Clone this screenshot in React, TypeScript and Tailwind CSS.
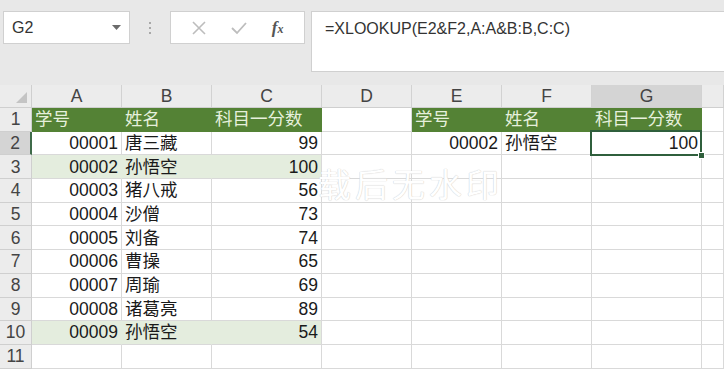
const ids = ["00001", "00002", "00003", "00004", "00005", "00006", "00007", "00008", "00009"];
const names = ["唐三藏", "孙悟空", "猪八戒", "沙僧", "刘备", "曹操", "周瑜", "诸葛亮", "孙悟空"];
const scores = ["99", "100", "56", "73", "74", "65", "69", "89", "54"];

const colWidths = ["w-[90px]", "w-[90px]", "w-[110px]", "w-[90px]", "w-[90px]", "w-[90px]", "w-[110px]", "w-[22px]"];
const letters = ["A", "B", "C", "D", "E", "F", "G", ""];

type Cell = { text?: string; align?: "l" | "r"; kind?: "head" | "hl" | "plain" };

function rowCells(r: number): Cell[] {
  if (r === 1) {
    return [
      { text: "学号", kind: "head" },
      { text: "姓名", kind: "head" },
      { text: "科目一分数", kind: "head" },
      {},
      { text: "学号", kind: "head" },
      { text: "姓名", kind: "head" },
      { text: "科目一分数", kind: "head" },
      {},
    ];
  }
  if (r >= 2 && r <= 10) {
    const i = r - 2;
    const hl = r === 3 || r === 10;
    const k = hl ? "hl" : "plain";
    return [
      { text: ids[i], align: "r", kind: k },
      { text: names[i], kind: k },
      { text: scores[i], align: "r", kind: k },
      {},
      r === 2 ? { text: "00002", align: "r" } : {},
      r === 2 ? { text: "孙悟空" } : {},
      r === 2 ? { text: "100", align: "r" } : {},
      {},
    ];
  }
  return [{}, {}, {}, {}, {}, {}, {}, {}];
}

function GridCell({ cell, col, selected }: { cell: Cell; col: number; selected: boolean }) {
  let bg = "bg-white";
  let border = "border-[#d9d9d9]";
  let color = "text-[#1a1a1a]";
  if (cell.kind === "head") {
    bg = "bg-[#548235]";
    color = "text-[#e6f0dc]";
    border = "border-r-[#548235] border-b-[#548235]";
  } else if (cell.kind === "hl") {
    bg = "bg-[#e4edde]";
    border = col === 2 ? "border-r-[#d9d9d9] border-b-[#d9d9d9]" : "border-r-[#e4edde] border-b-[#d9d9d9]";
  }
  return (
    <div
      className={`relative h-full shrink-0 border-r border-b ${colWidths[col]} ${bg} ${border} ${color} flex items-center ${
        cell.align === "r" ? "justify-end pr-[3px]" : "justify-start pl-[3px]"
      } whitespace-nowrap`}
    >
      {cell.text}
      {selected && (
        <div className="absolute z-10 -left-[2px] -top-[2px] w-[112px] h-[26px] border-2 border-[#2f5f3c]">
          <div className="absolute -right-[5px] -bottom-[5px] w-[7px] h-[7px] bg-[#2f5f3c] border border-white" />
        </div>
      )}
    </div>
  );
}

export default function App() {
  const rows = Array.from({ length: 11 }, (_, i) => i + 1);
  return (
    <div
      className="relative w-[724px] h-[369px] overflow-hidden bg-[#e8e8e8] text-[17.5px]"
      style={{ fontFamily: '"Liberation Sans", "Noto Sans CJK SC", sans-serif' }}
    >
      {/* formula bar */}
      <div className="flex items-start pt-[11px] h-[85px]">
        <div className="ml-[3px] w-[127px] h-[33px] bg-white border border-[#d0d0d0] flex items-center justify-between pl-[8px] pr-[8px]">
          <span className="text-[16px] text-[#333]">G2</span>
          <svg width="9" height="6" viewBox="0 0 9 6">
            <path d="M0 0 L9 0 L4.5 5 Z" fill="#6b6b6b" />
          </svg>
        </div>
        <div className="w-[40px] h-[33px] flex flex-col items-center justify-center gap-[3px]">
          <span className="w-[2px] h-[2px] bg-[#a8a8a8]" />
          <span className="w-[2px] h-[2px] bg-[#a8a8a8]" />
          <span className="w-[2px] h-[2px] bg-[#a8a8a8]" />
        </div>
        <div className="w-[135px] h-[33px] bg-white border border-[#d0d0d0] flex items-center justify-around px-[8px]">
          <svg width="14" height="14" viewBox="0 0 14 14">
            <path d="M1 1 L13 13 M13 1 L1 13" stroke="#bdbdbd" strokeWidth="1.6" />
          </svg>
          <svg width="16" height="14" viewBox="0 0 16 14">
            <path d="M1 7 L6 12 L15 2" stroke="#bdbdbd" strokeWidth="1.8" fill="none" />
          </svg>
          <span className="text-[17px] italic font-bold text-[#555]" style={{ fontFamily: '"Liberation Serif", serif' }}>
            f<span className="text-[12px]">x</span>
          </span>
        </div>
        <div className="ml-[6px] flex-1 -mr-[2px] h-[61px] bg-white border border-[#d0d0d0] pl-[13px] pt-[5px] text-[16px] text-[#333]">
          =XLOOKUP(E2&amp;F2,A:A&amp;B:B,C:C)
        </div>
      </div>

      {/* column headers */}
      <div className="flex h-[23px] bg-[#ececec] border-b border-[#cfcfcf]">
        <div className="w-[32px] shrink-0 h-full border-r border-[#cfcfcf] flex items-end justify-end pr-[4px] pb-[4px]">
          <svg width="11" height="11" viewBox="0 0 11 11">
            <path d="M11 0 L11 11 L0 11 Z" fill="#c4c4c4" />
          </svg>
        </div>
        {letters.map((l, i) => (
          <div
            key={i}
            className={`${colWidths[i]} shrink-0 h-full border-r border-[#d2d2d2] flex items-center justify-center text-[#444] ${
              l === "G" ? "bg-[#d4d4d4]" : ""
            }`}
          >
            {l}
          </div>
        ))}
      </div>

      {/* rows */}
      {rows.map((r) => (
        <div key={r} className="flex h-[23.7px]">
          <div
            className={`w-[32px] shrink-0 h-full border-b border-r flex items-center justify-center text-[#444] ${
              r === 2 ? "bg-[#d4d4d4] border-r-2 border-r-[#3f6b4a] border-b-[#cfcfcf]" : "bg-[#ececec] border-[#cfcfcf]"
            }`}
          >
            {r}
          </div>
          {rowCells(r).map((c, ci) => (
            <GridCell key={ci} cell={c} col={ci} selected={r === 2 && ci === 6} />
          ))}
        </div>
      ))}

      {/* watermark */}
      <div
        className="absolute z-20 left-[318px] top-[159px] text-[33px] tracking-[4px] text-white pointer-events-none"
        style={{ fontFamily: '"Noto Sans CJK SC", sans-serif', textShadow: "0 0 1px #cfcfcf, 0 0 1px #cfcfcf" }}
      >
        载后无水印
      </div>
    </div>
  );
}
